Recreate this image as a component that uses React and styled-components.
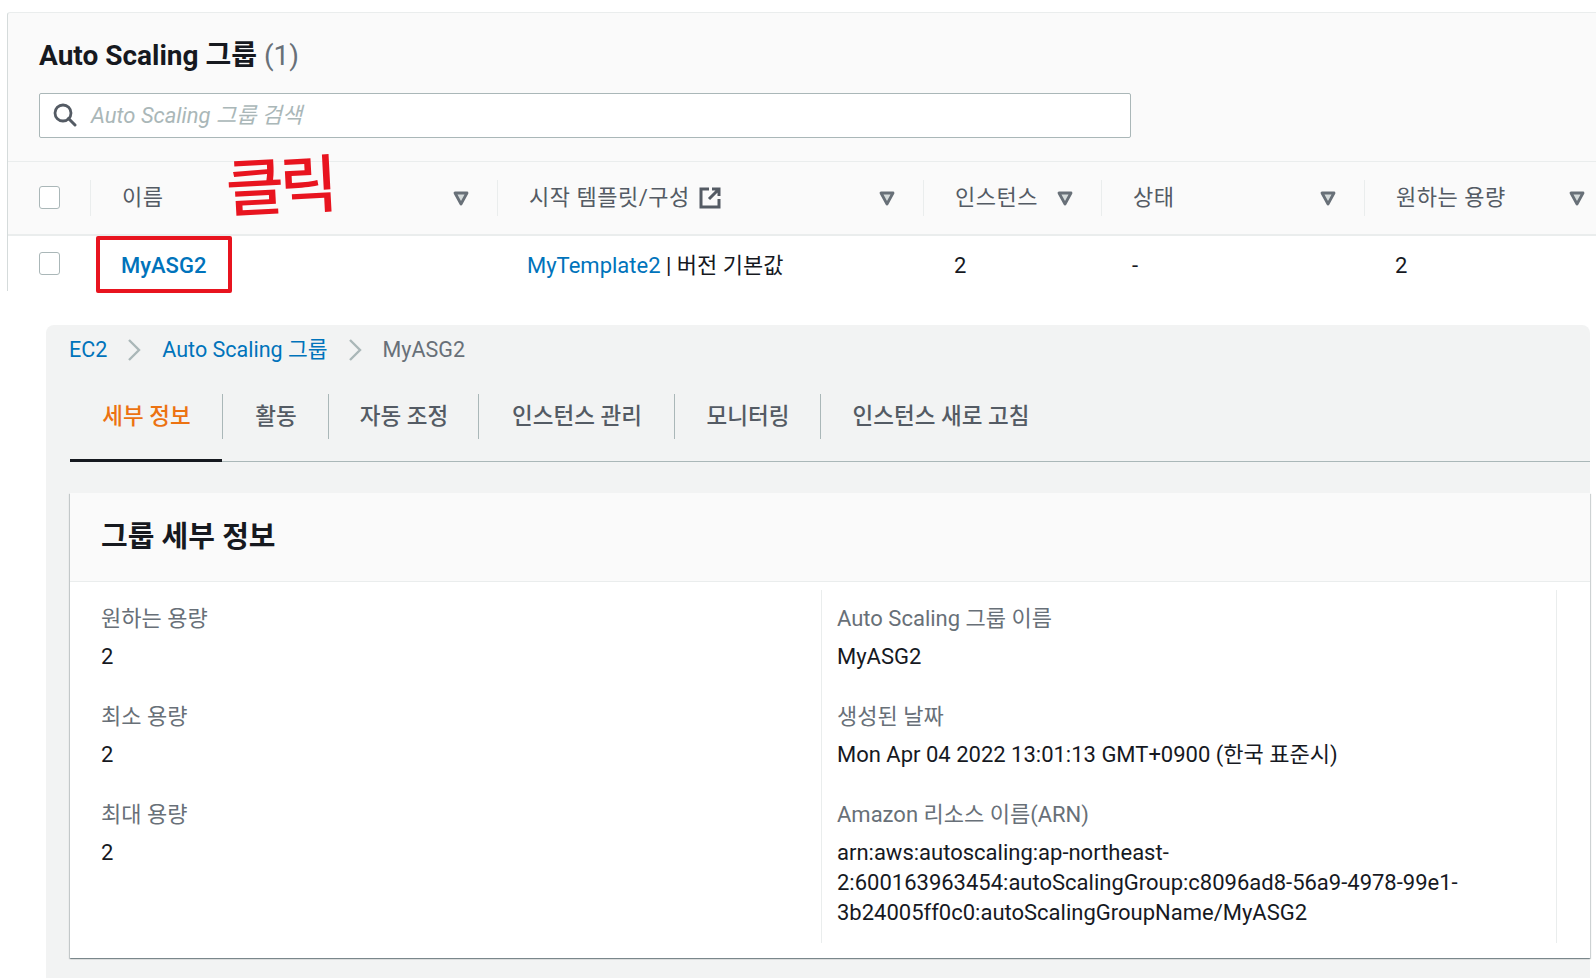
import React from 'react'
import styled, { createGlobalStyle } from 'styled-components'

const GlobalStyle = createGlobalStyle`
  html, body {
    margin: 0;
    padding: 0;
    background: #fff;
    overflow: hidden;
  }
  body {
    width: 1596px;
    height: 978px;
    font-family: Roboto, "Noto Sans CJK KR", sans-serif;
    color: #16191f;
  }
`

const Page = styled.div`
  display: flex;
  flex-direction: column;
  width: 1596px;
  height: 978px;
  overflow: hidden;
`

const ListPanel = styled.section`
  margin: 12px 0 0 7px;
  height: 278px;
  flex: none;
  background: #fafafa;
  border-top: 1px solid #eaeded;
  border-left: 1px solid #d5dbdb;
  border-top-left-radius: 3px;
  position: relative;
`

const PanelHead = styled.div`
  height: 149px;
  padding: 0 0 0 31px;
  border-bottom: 1px solid #eaeded;
  box-sizing: border-box;
`

const Title = styled.h1`
  margin: 0;
  padding-top: 26px;
  height: 80px;
  box-sizing: border-box;
  font-size: 28px;
  line-height: 34px;
  font-weight: 700;
  color: #16191f;
`

const Count = styled.span`
  font-weight: 400;
  color: #687078;
`

const SearchBox = styled.div`
  width: 1092px;
  height: 45px;
  box-sizing: border-box;
  display: flex;
  align-items: center;
  gap: 14px;
  padding-left: 13px;
  background: #fff;
  border: 1px solid #aab7b8;
  border-radius: 2px;
  svg {
    margin-top: -2px;
  }
`

const Placeholder = styled.span`
  font-size: 22px;
  line-height: 30px;
  margin-top: 0;
  font-style: italic;
  color: #aab7b8;
`

const Row = styled.div`
  display: grid;
  grid-template-columns: 82px 407px 426px 178px 263px 249px;
  align-items: center;
  height: ${p => p.$height}px;
  background: ${p => p.$bg};
  border-bottom: ${p => (p.$lined ? '2px solid #eaeded' : 'none')};
  box-sizing: border-box;
`

const CheckCell = styled.div`
  padding-left: 31px;
  display: flex;
  align-items: center;
  margin-top: ${p => p.$shift || 0}px;
`

const Check = styled.span`
  display: block;
  width: 19px;
  height: 21px;
  background: #fff;
  border: 1px solid #aab7b8;
  border-radius: 3px;
`

const HeadCell = styled.div`
  height: 36px;
  padding: 0 28px 0 31px;
  display: flex;
  align-items: center;
  justify-content: space-between;
  border-left: 1px solid #eaeded;
  font-size: 22px;
  line-height: 30px;
  letter-spacing: 0.5px;
  color: #545b64;
`

const HeadLabel = styled.span`
  display: inline-flex;
  align-items: center;
  gap: 9px;
`

const Cell = styled.div`
  padding-left: ${p => p.$pad ?? 31}px;
  margin-top: 5px;
  font-size: 22px;
  line-height: 30px;
  color: #16191f;
`

const NameLink = styled.span`
  position: relative;
  display: inline-block;
  font-weight: 500;
  color: #0073bb;
`

const Highlight = styled.span`
  position: absolute;
  left: -25px;
  top: -15px;
  width: 136px;
  height: 57px;
  box-sizing: border-box;
  border: 4px solid #e8141f;
  border-radius: 2px;
`

const Link = styled.span`
  color: #0073bb;
`

const Scribble = styled.span`
  position: absolute;
  left: 218px;
  top: 133px;
  font-size: 63px;
  line-height: 84px;
  font-weight: 500;
  color: #e8141f;
  letter-spacing: -4px;
  transform: rotate(-3deg);
`

const DetailPanel = styled.section`
  margin: 34px 6px 0 46px;
  padding: 0 0 20px 24px;
  flex: 1;
  min-height: 0;
  display: flex;
  flex-direction: column;
  background: #f2f3f3;
  border-radius: 8px 8px 0 0;
`

const Crumbs = styled.nav`
  height: 50px;
  margin-left: -1px;
  display: flex;
  align-items: center;
  gap: 20px;
  font-size: 21.5px;
  line-height: 30px;
  flex: none;
`

const CrumbCurrent = styled.span`
  color: #687078;
`

const Tabs = styled.div`
  height: 87px;
  padding-top: 19px;
  box-sizing: border-box;
  display: flex;
  align-items: flex-start;
  border-bottom: 1px solid #aab7b8;
  position: relative;
  flex: none;
`

const Tab = styled.div`
  position: relative;
  width: ${p => p.$width}px;
  height: 67px;
  box-sizing: border-box;
  padding: 0 0 24px 0;
  display: flex;
  align-items: center;
  justify-content: center;
  font-size: 22.5px;
  line-height: 30px;
  font-weight: 500;
  color: ${p => (p.$active ? '#ec7211' : '#545b64')};
  &::after {
    content: '';
    display: ${p => (p.$last ? 'none' : 'block')};
    position: absolute;
    right: 0;
    top: 0;
    height: 45px;
    width: 1px;
    background: #aab7b8;
  }
  &::before {
    content: '';
    display: ${p => (p.$active ? 'block' : 'none')};
    position: absolute;
    left: 0;
    right: 1px;
    bottom: -1px;
    height: 3px;
    background: #16191f;
  }
`

const Card = styled.div`
  margin-top: 31px;
  flex: 1;
  display: flex;
  flex-direction: column;
  background: #fff;
  box-shadow: 0 1px 1px 0 rgba(0, 28, 36, 0.3), 1px 1px 1px 0 rgba(0, 28, 36, 0.15), -1px 1px 1px 0 rgba(0, 28, 36, 0.15);
`

const CardHead = styled.div`
  height: 89px;
  flex: none;
  box-sizing: border-box;
  padding: 0 0 0 31px;
  display: flex;
  align-items: center;
  background: #fafafa;
  border-bottom: 1px solid #eaeded;
  font-size: 29px;
  line-height: 36px;
  font-weight: 700;
`

const CardBody = styled.div`
  display: grid;
  grid-template-columns: 751px 736px;
  padding-top: 8px;
`

const Column = styled.div`
  height: 353px;
  padding: 14px 0 0 ${p => (p.$right ? 15 : 31)}px;
  box-sizing: border-box;
  border-left: ${p => (p.$right ? '1px solid #eaeded' : 'none')};
  border-right: ${p => (p.$right ? '1px solid #eaeded' : 'none')};
`

const Field = styled.div`
  height: 98px;
`

const Label = styled.div`
  font-size: 22px;
  line-height: 30px;
  color: #687078;
`

const Value = styled.div`
  margin-top: 8px;
  font-size: 22px;
  line-height: 30px;
  color: #16191f;
`

const FilterIcon = () => (
  <svg width="16" height="15" viewBox="0 0 16 15" fill="none">
    <path d="M2 2h12L8 13z" fill="#d5dbdb" stroke="#687078" strokeWidth="2.8" strokeLinejoin="round" />
  </svg>
)

const SearchIcon = () => (
  <svg width="24" height="24" viewBox="0 0 24 24" fill="none">
    <circle cx="10" cy="10" r="8" stroke="#545b64" strokeWidth="2.8" />
    <path d="M15.5 15.5L22 22" stroke="#545b64" strokeWidth="3" strokeLinecap="round" />
  </svg>
)

const ExternalIcon = () => (
  <svg width="22" height="22" viewBox="0 0 22 22" fill="none">
    <path d="M10 2H2v18h18v-8" stroke="#545b64" strokeWidth="3" />
    <path d="M13 2h7v7M20 2L10 12" stroke="#545b64" strokeWidth="3" />
  </svg>
)

const Chevron = () => (
  <svg width="15" height="24" viewBox="0 0 15 24" fill="none">
    <path d="M2 2l10 10L2 22" stroke="#aab7b8" strokeWidth="2.4" />
  </svg>
)

const headers = [
  { label: '이름' },
  { label: '시작 템플릿/구성', external: true },
  { label: '인스턴스' },
  { label: '상태' },
  { label: '원하는 용량' },
]

const tabs = [
  { label: '세부 정보', width: 153, active: true },
  { label: '활동', width: 106 },
  { label: '자동 조정', width: 150 },
  { label: '인스턴스 관리', width: 196 },
  { label: '모니터링', width: 146 },
  { label: '인스턴스 새로 고침', width: 240, last: true },
]

const App = () => (
  <Page>
    <GlobalStyle />
    <ListPanel>
      <PanelHead>
        <Title>
          Auto Scaling 그룹 <Count>(1)</Count>
        </Title>
        <SearchBox>
          <SearchIcon />
          <Placeholder>Auto Scaling 그룹 검색</Placeholder>
        </SearchBox>
      </PanelHead>
      <Row $height={74} $bg="#fafafa" $lined>
        <CheckCell $shift={-2}>
          <Check />
        </CheckCell>
        {headers.map(h => (
          <HeadCell key={h.label}>
            <HeadLabel>
              {h.label}
              {h.external && <ExternalIcon />}
            </HeadLabel>
            <FilterIcon />
          </HeadCell>
        ))}
      </Row>
      <Row $height={55} $bg="#fff">
        <CheckCell $shift={-1}>
          <Check />
        </CheckCell>
        <Cell>
          <NameLink>
            MyASG2
            <Highlight />
          </NameLink>
        </Cell>
        <Cell $pad={30}>
          <Link>MyTemplate2</Link> | 버전 기본값
        </Cell>
        <Cell>2</Cell>
        <Cell>-</Cell>
        <Cell>2</Cell>
      </Row>
      <Scribble>클릭</Scribble>
    </ListPanel>
    <DetailPanel>
      <Crumbs>
        <Link>EC2</Link>
        <Chevron />
        <Link>Auto Scaling 그룹</Link>
        <Chevron />
        <CrumbCurrent>MyASG2</CrumbCurrent>
      </Crumbs>
      <Tabs>
        {tabs.map(t => (
          <Tab key={t.label} $width={t.width} $active={t.active} $last={t.last}>
            {t.label}
          </Tab>
        ))}
      </Tabs>
      <Card>
        <CardHead>그룹 세부 정보</CardHead>
        <CardBody>
          <Column>
            <Field>
              <Label>원하는 용량</Label>
              <Value>2</Value>
            </Field>
            <Field>
              <Label>최소 용량</Label>
              <Value>2</Value>
            </Field>
            <Field>
              <Label>최대 용량</Label>
              <Value>2</Value>
            </Field>
          </Column>
          <Column $right>
            <Field>
              <Label>Auto Scaling 그룹 이름</Label>
              <Value>MyASG2</Value>
            </Field>
            <Field>
              <Label>생성된 날짜</Label>
              <Value>Mon Apr 04 2022 13:01:13 GMT+0900 (한국 표준시)</Value>
            </Field>
            <Field>
              <Label>Amazon 리소스 이름(ARN)</Label>
              <Value>
                arn:aws:autoscaling:ap-northeast-
                <br />
                2:600163963454:autoScalingGroup:c8096ad8-56a9-4978-99e1-
                <br />
                3b24005ff0c0:autoScalingGroupName/MyASG2
              </Value>
            </Field>
          </Column>
        </CardBody>
      </Card>
    </DetailPanel>
  </Page>
)

export default App
